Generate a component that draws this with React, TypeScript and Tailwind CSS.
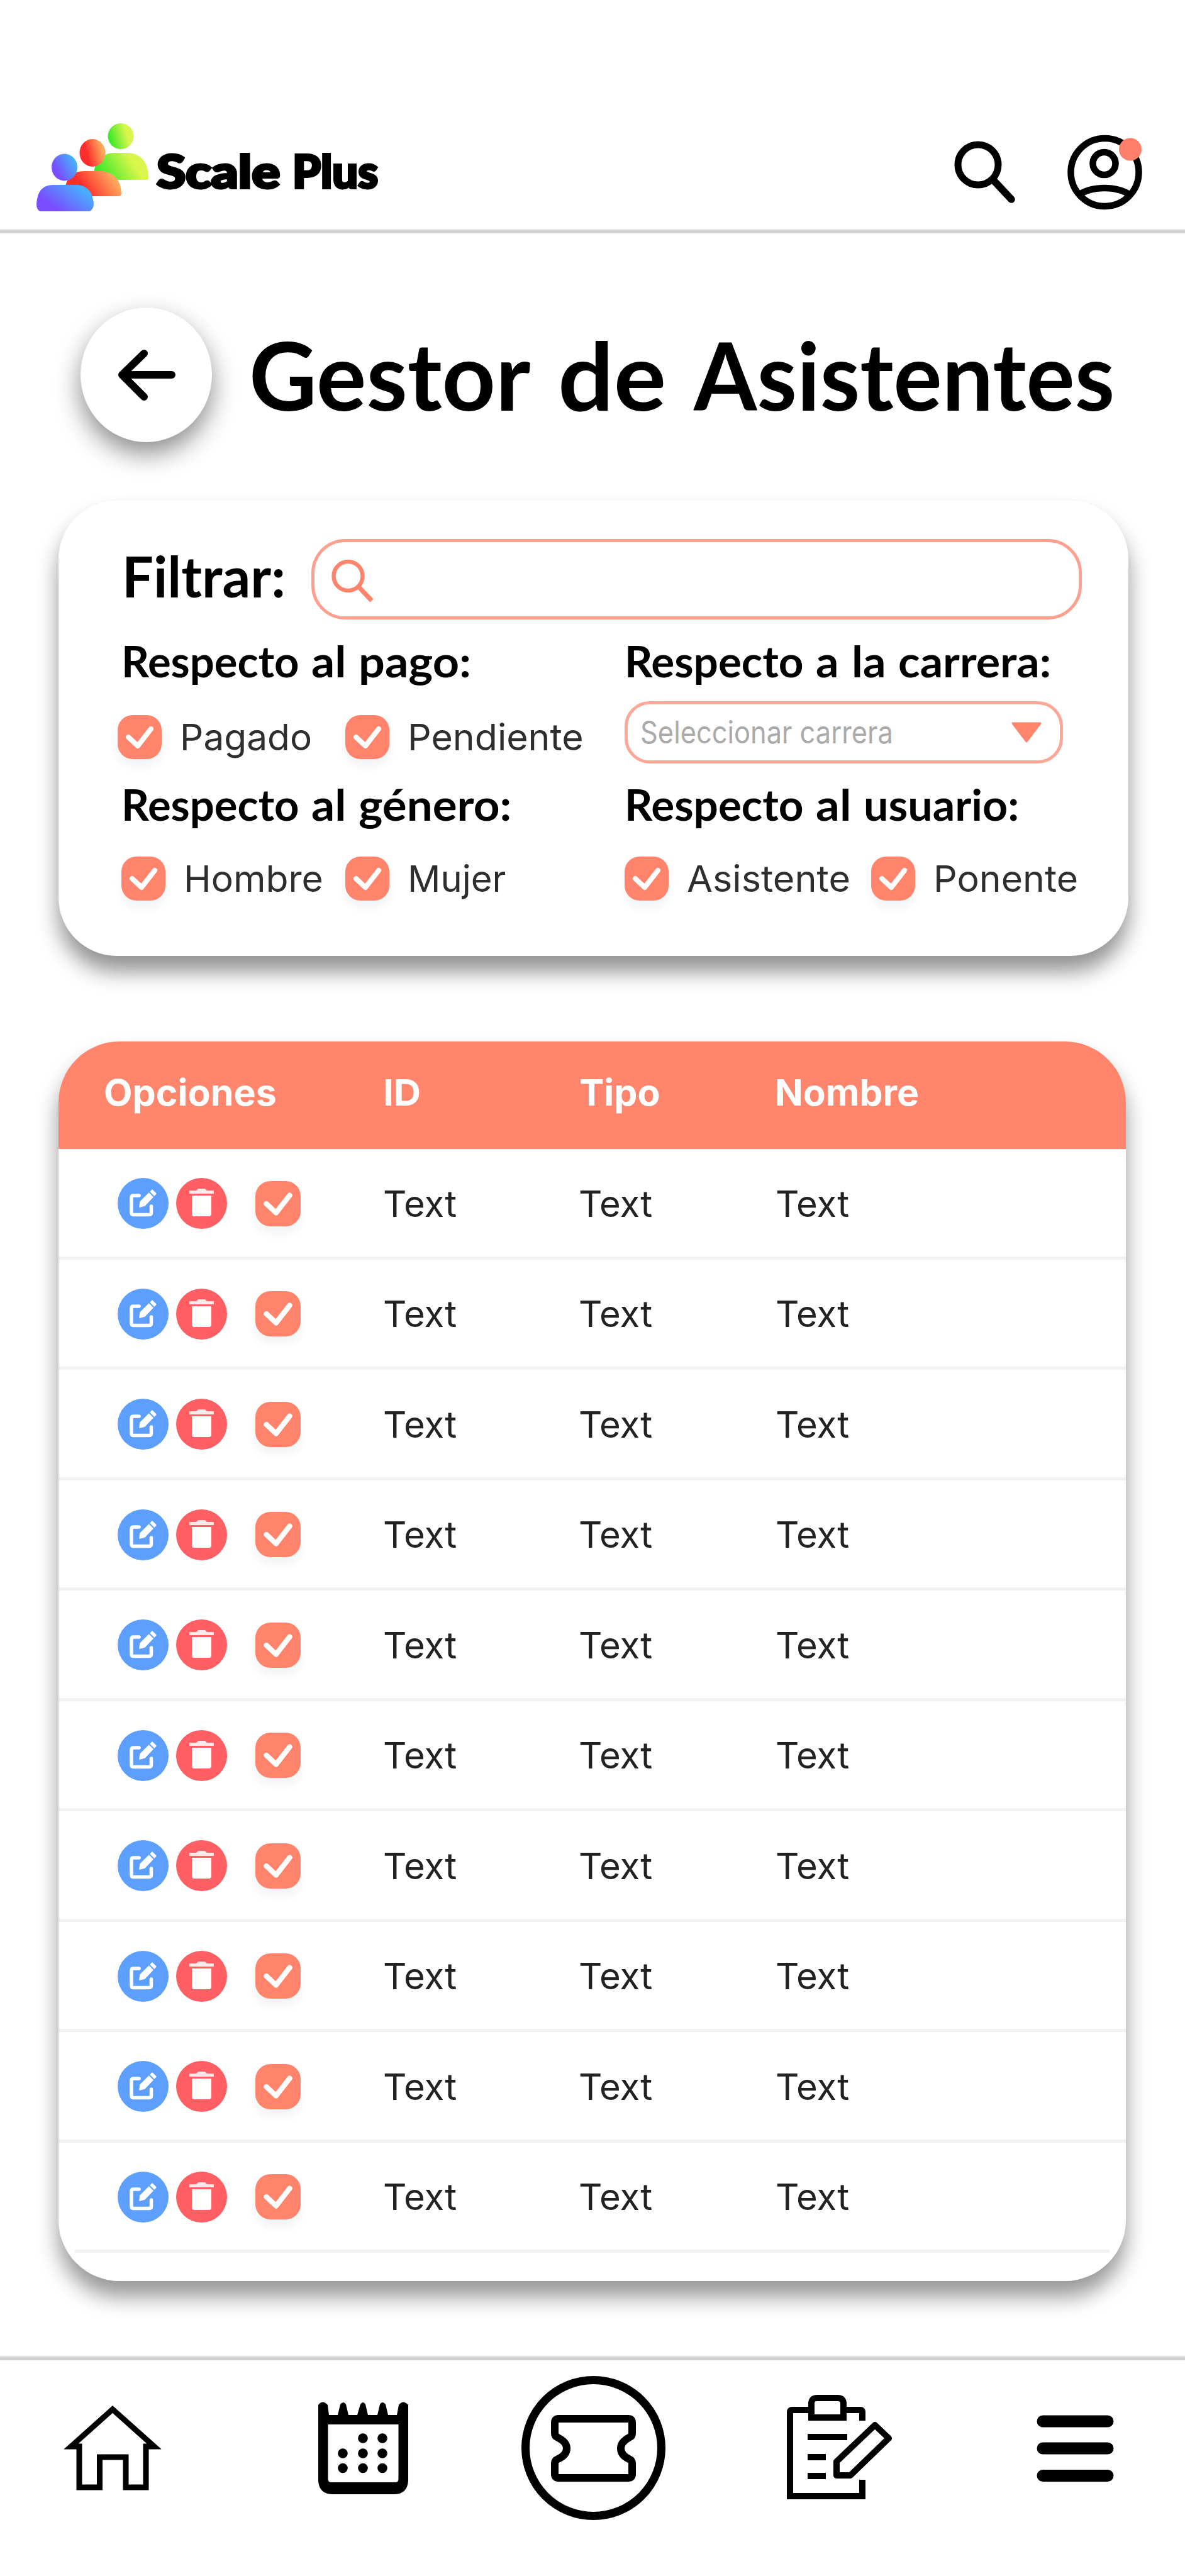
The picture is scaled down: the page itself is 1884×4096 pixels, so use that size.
import { useLayoutEffect, useRef, useState } from "react";
import type { ReactNode } from "react";

/** Single line of text stretched horizontally so that it fills an exact width. */
function Fit({ width, className = "", children }: { width: number; className?: string; children: ReactNode }) {
  const ref = useRef<HTMLSpanElement>(null);
  const [scale, setScale] = useState(1);
  useLayoutEffect(() => {
    if (ref.current) setScale(width / ref.current.offsetWidth);
  }, [width]);
  return (
    <span className="block shrink-0" style={{ width }}>
      <span
        ref={ref}
        className={`inline-block origin-left whitespace-nowrap leading-none align-top ${className}`}
        style={{ transform: `scaleX(${scale})` }}
      >
        {children}
      </span>
    </span>
  );
}

function Logo() {
  return (
    <svg className="h-[150px] w-[190px] shrink-0" viewBox="54 190 190 150">
      <defs>
        <linearGradient id="green" x1="0" y1="0.7" x2="1" y2="0.4">
          <stop offset="0.1" stopColor="#3fe82b" />
          <stop offset="0.75" stopColor="#d8f64c" />
        </linearGradient>
        <linearGradient id="red" x1="0" y1="0.7" x2="1" y2="0.4">
          <stop offset="0.3" stopColor="#ff2d2b" />
          <stop offset="0.9" stopColor="#ffa75d" />
        </linearGradient>
        <linearGradient id="blue" x1="0" y1="0.8" x2="1" y2="0.2">
          <stop offset="0.2" stopColor="#7a4dff" />
          <stop offset="0.9" stopColor="#45b2ff" />
        </linearGradient>
      </defs>
      <ellipse cx="192" cy="216.5" rx="20.5" ry="20.5" fill="url(#green)" />
      <path d="M149 286V276Q152 243 184 243H206Q236 247 236 284Q236 286 233 286Z" fill="url(#green)" />
      <ellipse cx="147" cy="243" rx="20.500" ry="22" fill="url(#red)" />
      <path d="M103 312V300Q108 272 134 272H162Q192 276 193 308Q193 312 188 312Z" fill="url(#red)" />
      <ellipse cx="102.500" cy="266" rx="20.500" ry="21.500" fill="url(#blue)" />
      <path d="M64 336Q58 334 58 324Q60 294 84 294H124Q147 297 149 324Q149 332 143 336Z" fill="url(#blue)" />
    </svg>
  );
}

function CheckBox({ className = "size-[70px]" }: { className?: string }) {
  return (
    <span className={`block shrink-0 rounded-[24px] bg-[#ff846b] shadow-[0_10px_16px_rgba(0,40,60,0.06)] ${className}`}>
      <svg viewBox="0 0 70 70" className="size-full" fill="none">
        <path d="M17 35L32 49L53 22" stroke="#fff" strokeWidth="8" strokeLinecap="round" strokeLinejoin="round" />
      </svg>
    </span>
  );
}

function Option({ label, width, className = "" }: { label: string; width: number; className?: string }) {
  return (
    <div className={`flex items-center gap-[29px] ${className}`}>
      <CheckBox />
      <Fit width={width} className="font-[Inter,sans-serif] text-[58px] text-[#2e2e2e]">{label}</Fit>
    </div>
  );
}

type Word = { text: string; width: number };

function Heading({ words }: { words: Word[] }) {
  return (
    <h2 className="flex h-[68px] gap-[20px]">
      {words.map((w) => (
        <Fit key={w.text} width={w.width} className="font-[Lato,sans-serif] text-[68px] font-bold text-black">{w.text}</Fit>
      ))}
    </h2>
  );
}

function EditButton() {
  return (
    <svg className="size-[81px] shrink-0" viewBox="0 0 81 81" fill="none">
      <circle cx="40.500" cy="40.500" r="40.500" fill="#5d9fff" />
      <path d="M34 28H25Q22 28 22 31V55Q22 58.500 25 58.500H50Q53.500 58.500 53.500 55V45" stroke="#fff" strokeWidth="5.500" strokeLinecap="round" />
      <path d="M35 46L36 38L55 19L61 25L43 44Z" fill="#fff" stroke="#fff" strokeWidth="1.500" strokeLinejoin="round" />
      <path d="M50 22L58 30" stroke="#5d9fff" strokeWidth="2" />
    </svg>
  );
}

function DeleteButton() {
  return (
    <svg className="size-[81px] shrink-0" viewBox="0 0 81 81">
      <circle cx="40.500" cy="40.500" r="40.500" fill="#ff5f62" />
      <path d="M21 20H32L35 17H46L49 20H60V25H21Z" fill="#ffe9e9" />
      <path d="M25 28H56V57Q56 61 52 61H29Q25 61 25 57Z" fill="#fff" />
    </svg>
  );
}

function Cell() {
  return <Fit width={117} className="font-[Inter,sans-serif] text-[58px] text-[#222]">Text</Fit>;
}

function HeadCell({ width, children }: { width: number; children: ReactNode }) {
  return <Fit width={width} className="font-[Inter,sans-serif] text-[58px] font-bold text-white">{children}</Fit>;
}

const titleWords: Word[] = [
  { text: "Gestor", width: 447 },
  { text: "de", width: 172 },
  { text: "Asistentes", width: 669 },
];

const rows = Array.from({ length: 10 }, (_, i) => i);

export default function App() {
  return (
    <div className="flex h-[4096px] w-[1884px] flex-col overflow-hidden bg-white">
      <header className="flex h-[371px] shrink-0 items-start border-b-[6px] border-[#d0d0d0] pl-[54px] pt-[190px]">
        <Logo />
        <div className="flex gap-[20px] pl-[5px] pt-[45px]">
          <Fit width={196} className="font-[Lato,sans-serif] text-[72px] font-black text-black [-webkit-text-stroke:4px_black] [stroke-linejoin:round]">
            Scale
          </Fit>
          <Fit width={136} className="font-[Lato,sans-serif] text-[72px] font-black text-black [-webkit-text-stroke:4px_black] [stroke-linejoin:round]">
            Plus
          </Fit>
        </div>
        <svg className="ml-[909px] h-[150px] w-[110px] shrink-0" viewBox="1510 190 110 150" fill="none" stroke="#000">
          <circle cx="1555" cy="262" r="32" strokeWidth="11" />
          <path d="M1578 285L1608 317" strokeWidth="11.500" strokeLinecap="round" />
        </svg>
        <svg className="ml-[70px] h-[150px] w-[140px] shrink-0" viewBox="1690 190 140 150" fill="none" stroke="#000" strokeWidth="10.500">
          <circle cx="1756.500" cy="274" r="54" />
          <circle cx="1755.500" cy="260" r="18" />
          <path d="M1712 312Q1729 299 1756 299Q1783 299 1800 312" />
          <circle cx="1797" cy="237.500" r="18" fill="#ff806a" stroke="none" />
        </svg>
      </header>

      <div className="ml-[128px] mt-[118px] flex h-[215px] shrink-0 items-start">
        <button className="grid h-[214px] w-[209px] shrink-0 place-items-center rounded-[50%] bg-white shadow-[0_18px_40px_rgba(0,0,0,0.46)]">
          <svg className="h-[90px] w-[104px]" viewBox="181 552 104 90" fill="none" stroke="#000" strokeWidth="12" strokeLinecap="round" strokeLinejoin="round">
            <path d="M229 563L194 597L229 632M196 597H273" />
          </svg>
        </button>
        <h1 className="ml-[59px] flex gap-[44px] pt-[31px]">
          {titleWords.map((w) => (
            <Fit key={w.text} width={w.width} className="font-[Lato,sans-serif] text-[150px] font-bold text-black">{w.text}</Fit>
          ))}
        </h1>
      </div>

      <section className="ml-[93px] mt-[92px] h-[724px] w-[1701px] shrink-0 rounded-[93px] bg-white pt-[61px] shadow-[0_25px_34px_rgba(0,0,0,0.43)]">
        <div className="ml-[101px] flex h-[128px] items-start">
          <div className="w-[301px] pt-[13px]">
            <Fit width={260} className="font-[Lato,sans-serif] text-[90px] font-bold text-black">Filtrar:</Fit>
          </div>
          <div className="flex h-[128px] w-[1225px] items-center rounded-[54px] border-[5px] border-[#ffa08e] pl-[23px] pt-[4px]">
            <svg className="h-[76px] w-[76px]" viewBox="522 883 76 76" fill="none" stroke="#ff846b" strokeWidth="6.500">
              <circle cx="552.500" cy="914" r="23" />
              <path d="M569 931L590 953" strokeWidth="7.500" />
            </svg>
          </div>
        </div>

        <div className="ml-[94px] mt-[32px] flex">
          <div className="flex w-[806px] flex-col">
            <div className="pl-[6px]">
              <Heading words={[{ text: "Respecto", width: 282 }, { text: "al", width: 55 }, { text: "pago:", width: 179 }]} />
            </div>
            <div className="mt-[30px] flex h-[99px] items-center pt-[14px]">
              <Option className="w-[362px]" label="Pagado" width={210} />
              <Option label="Pendiente" width={280} />
            </div>
            <div className="mt-[31px] pl-[6px]">
              <Heading words={[{ text: "Respecto", width: 282 }, { text: "al", width: 55 }, { text: "género:", width: 243 }]} />
            </div>
            <div className="mt-[49px] flex h-[70px] items-center pl-[6px]">
              <Option className="w-[356px]" label="Hombre" width={222} />
              <Option label="Mujer" width={156} />
            </div>
          </div>
          <div className="flex flex-col">
            <Heading words={[{ text: " Respecto", width: 284 }, { text: "a", width: 37 }, { text: "la", width: 54 }, { text: "carrera:", width: 243 }]} />
            <div className="mt-[30px] flex h-[99px] w-[697px] items-center justify-between rounded-[40px] border-[5px] border-[#ffa796] pl-[20px] pr-[27px]">
              <Fit width={402} className="font-[Inter,sans-serif] text-[49px] text-[#aaa]">Seleccionar carrera</Fit>
              <svg className="h-[34px] w-[52px]" viewBox="0 0 52 34">
                <path d="M4 2H48L26 31Z" fill="#ff846b" stroke="#ff846b" strokeWidth="3" strokeLinejoin="round" />
              </svg>
            </div>
            <div className="mt-[31px]">
              <Heading words={[{ text: "Respecto", width: 284 }, { text: "al", width: 56 }, { text: "usuario:", width: 247 }]} />
            </div>
            <div className="mt-[49px] flex h-[70px] items-center">
              <Option className="w-[392px]" label="Asistente" width={260} />
              <Option label="Ponente" width={230} />
            </div>
          </div>
        </div>
      </section>

      <section className="ml-[93px] mt-[136px] h-[1971px] w-[1697px] shrink-0 rounded-[97px] bg-white shadow-[0_25px_34px_rgba(0,0,0,0.41)]">
        <div className="grid h-[171px] grid-cols-[444px_312px_311px_1fr] items-center rounded-t-[97px] bg-[#ff866d] pb-[10px] pl-[72px]">
          <HeadCell width={275}>Opciones</HeadCell>
          <HeadCell width={60}>ID</HeadCell>
          <HeadCell width={129}>Tipo</HeadCell>
          <HeadCell width={229}>Nombre</HeadCell>
        </div>
        <div className="flex h-[1755px] flex-col">
          {rows.map((i) => (
            <div key={i} className="grid flex-1 grid-cols-[422px_311px_313px_1fr] items-center border-b-[5px] border-[#f2f2f2] pl-[94px] pt-[3px] last:mx-[26px] last:pl-[68px]">
              <div className="flex items-center">
                <EditButton />
                <span className="w-[12px]" />
                <DeleteButton />
                <CheckBox className="ml-[45px] size-[72px]" />
              </div>
              <Cell />
              <Cell />
              <Cell />
            </div>
          ))}
        </div>
      </section>

      <footer className="mt-[120px] flex h-[349px] shrink-0 items-start border-t-[6px] border-[#d0d0d0] pt-[20px]">
        <svg className="ml-[90px] h-[240px] w-[180px]" viewBox="90 3773 180 240" fill="none" stroke="#000" strokeWidth="9">
          <path d="M113 3890L179 3831L245 3890H232V3955H200V3907H158.500V3955H126V3890Z" strokeLinejoin="miter" />
        </svg>
        <svg className="ml-[220px] h-[240px] w-[180px]" viewBox="490 3773 180 240">
          <path fillRule="evenodd" d="M506 3824Q513 3815 521 3824L523 3840H537L541 3823Q546 3817 550 3823L554 3840H568L573 3823Q577 3817 581 3823L585 3840H600L604 3823Q608 3817 613 3823L617 3840H631L634 3824Q641 3815 649 3824V3944Q648 3966 626 3966H529Q507 3966 506 3944ZM521.500 3855V3942Q521.500 3947 527 3947H628Q633.500 3947 633.500 3942V3855Z" />
          <circle cx="577" cy="3877" r="7.800" /><circle cx="608" cy="3877" r="7.800" />
          <circle cx="545" cy="3901" r="7.800" /><circle cx="577" cy="3901" r="7.800" /><circle cx="608" cy="3901" r="7.800" />
          <circle cx="545" cy="3924.500" r="7.800" /><circle cx="577" cy="3924.500" r="7.800" /><circle cx="608" cy="3924.500" r="7.800" />
        </svg>
        <svg className="ml-[154px] h-[240px] w-[240px]" viewBox="824 3773 240 240" fill="none" stroke="#000" strokeWidth="12">
          <circle cx="943.500" cy="3892.500" r="108" strokeWidth="13" />
          <path d="M882 3852Q882 3846 888 3846H999Q1005 3846 1005 3852V3869Q1005 3874 1000 3876Q987 3883 987 3893Q987 3904 1000 3910Q1005 3912 1005 3917V3934Q1005 3940 999 3940H888Q882 3940 882 3934V3917Q882 3912 887 3910Q901 3904 901 3893Q901 3883 887 3876Q882 3874 882 3869Z" />
        </svg>
        <svg className="ml-[176px] h-[240px] w-[190px]" viewBox="1240 3773 190 240" fill="none" stroke="#000" strokeWidth="10">
          <path d="M1286 3832H1259Q1256 3832 1256 3835V3969H1371V3943M1344 3832H1368Q1371 3832 1371 3835V3849" />
          <path d="M1290 3844V3822Q1290 3813 1299 3813H1332Q1341 3813 1341 3822V3844Z" />
          <path d="M1284 3875H1347M1284 3907H1313M1284 3937H1313" />
          <path d="M1330 3936V3914L1391 3856L1413 3877L1352 3936Z" strokeLinejoin="round" />
        </svg>
        <svg className="ml-[210px] h-[240px] w-[140px]" viewBox="1640 3773 140 240" stroke="#000" strokeWidth="19" strokeLinecap="round">
          <path d="M1658 3850H1761M1658 3893H1761M1658 3936.500H1761" />
        </svg>
      </footer>
    </div>
  );
}
